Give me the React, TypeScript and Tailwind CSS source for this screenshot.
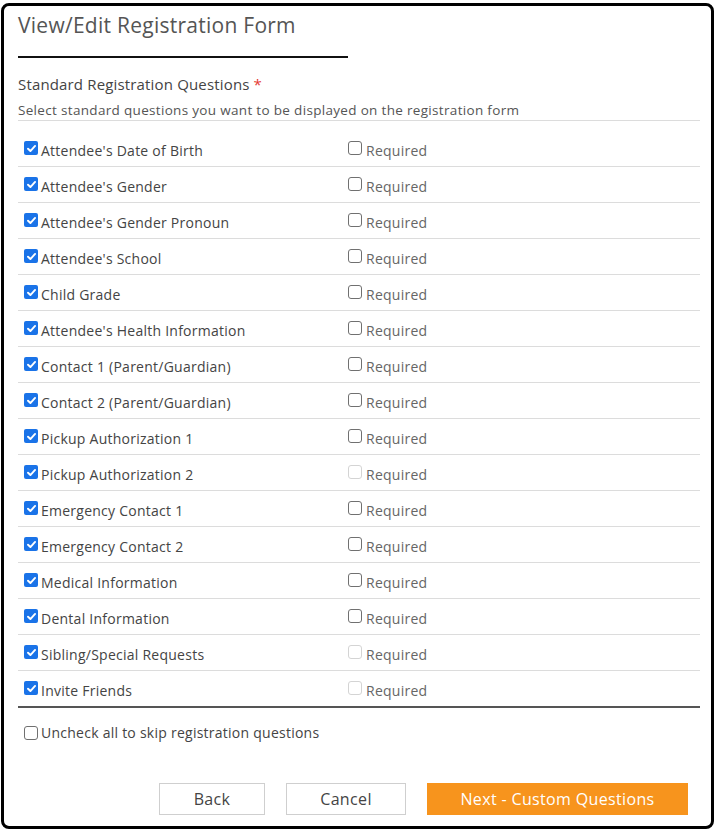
import { useState } from "react";

type Question = {
  label: string;
  lockRequired?: boolean;
};

const questions: Question[] = [
  { label: "Attendee's Date of Birth" },
  { label: "Attendee's Gender" },
  { label: "Attendee's Gender Pronoun" },
  { label: "Attendee's School" },
  { label: "Child Grade" },
  { label: "Attendee's Health Information" },
  { label: "Contact 1 (Parent/Guardian)" },
  { label: "Contact 2 (Parent/Guardian)" },
  { label: "Pickup Authorization 1" },
  { label: "Pickup Authorization 2", lockRequired: true },
  { label: "Emergency Contact 1" },
  { label: "Emergency Contact 2" },
  { label: "Medical Information" },
  { label: "Dental Information" },
  { label: "Sibling/Special Requests", lockRequired: true },
  { label: "Invite Friends", lockRequired: true },
];

function Box({ checked, disabled, onClick }: { checked: boolean; disabled?: boolean; onClick?: () => void }) {
  if (checked) {
    return (
      <span
        onClick={onClick}
        className="flex h-[14px] w-[14px] shrink-0 items-center justify-center rounded-[2px] bg-[#1a73e8]"
      >
        <svg width="11" height="11" viewBox="0 0 12 12" fill="none">
          <path d="M2.2 6.3 4.8 8.8 9.9 3.2" stroke="white" strokeWidth="2.1" strokeLinecap="round" strokeLinejoin="round" />
        </svg>
      </span>
    );
  }
  return (
    <span
      onClick={disabled ? undefined : onClick}
      className={
        disabled
          ? "block h-[14px] w-[14px] shrink-0 rounded-[3px] border border-[#d4d4d4] bg-white"
          : "block h-[14px] w-[14px] shrink-0 rounded-[3px] border border-[#707070] bg-white"
      }
    />
  );
}

export default function App() {
  const [shown, setShown] = useState<boolean[]>(questions.map(() => true));
  const [required, setRequired] = useState<boolean[]>(questions.map(() => false));
  const [skipAll, setSkipAll] = useState(false);

  const toggle = (list: boolean[], set: (v: boolean[]) => void, i: number) =>
    set(list.map((v, j) => (j === i ? !v : v)));

  return (
    <div className="h-[834px] w-[718px] bg-white pl-[1px] pt-[3px] font-['Open_Sans',sans-serif]">
      <div className="flex h-[826px] w-[713px] flex-col rounded-[8px] border-[3px] border-black pl-[14px] pr-[11px]">
        <h1 className="h-[38px] text-[21px] leading-[38px] tracking-[0.26px] text-[#555]">View/Edit Registration Form</h1>
        <div className="mt-[12px] h-[2px] w-[330px] bg-[#111]" />

        <div className="mt-[16px] text-[15px] leading-[20px] tracking-[0.16px] text-[#444]">
          Standard Registration Questions <span className="text-[#e53935]">*</span>
        </div>
        <div className="mt-[7px] border-b border-[#dcdcdc] pb-[1px] text-[13.5px] leading-[18px] tracking-[0.32px] text-[#555]">
          Select standard questions you want to be displayed on the registration form
        </div>

        <div className="pt-[10px]">
          {questions.map((q, i) => (
            <div
              key={q.label}
              className={
                i === questions.length - 1
                  ? "flex h-[35px] items-start"
                  : "flex h-[36px] items-start border-b border-[#dcdcdc]"
              }
            >
              <div className="ml-[6px] flex w-[324px] items-start gap-[3px]">
                <span className="mt-[10px] block">
                  <Box checked={shown[i]} onClick={() => toggle(shown, setShown, i)} />
                </span>
                <span className="mt-[10px] text-[14px] leading-[20px] tracking-[0.25px] text-[#444]">{q.label}</span>
              </div>
              <div className="flex items-start gap-[4px]">
                <span className="mt-[10px] block">
                  <Box
                    checked={required[i]}
                    disabled={q.lockRequired}
                    onClick={() => toggle(required, setRequired, i)}
                  />
                </span>
                <span className="mt-[10px] text-[14px] leading-[20px] tracking-[0.25px] text-[#666]">Required</span>
              </div>
            </div>
          ))}
        </div>
        <div className="h-[2px] bg-[#555]" />

        <div className="ml-[6px] mt-[15px] flex items-center gap-[3px]">
          <Box checked={skipAll} onClick={() => setSkipAll(!skipAll)} />
          <span className="text-[14px] leading-[20px] tracking-[0.25px] text-[#444]">
            Uncheck all to skip registration questions
          </span>
        </div>

        <div className="mr-[12px] mt-[40px] flex justify-end gap-[21px]">
          <button className="h-[32px] w-[106px] border border-[#cfcfcf] bg-white text-[16px] tracking-[0.35px] text-[#444]">
            Back
          </button>
          <button className="h-[32px] w-[120px] border border-[#cfcfcf] bg-white text-[16px] tracking-[0.35px] text-[#444]">
            Cancel
          </button>
          <button className="h-[32px] w-[261px] bg-[#f7941d] text-[16px] tracking-[0.35px] text-white">
            Next - Custom Questions
          </button>
        </div>
      </div>
    </div>
  );
}
